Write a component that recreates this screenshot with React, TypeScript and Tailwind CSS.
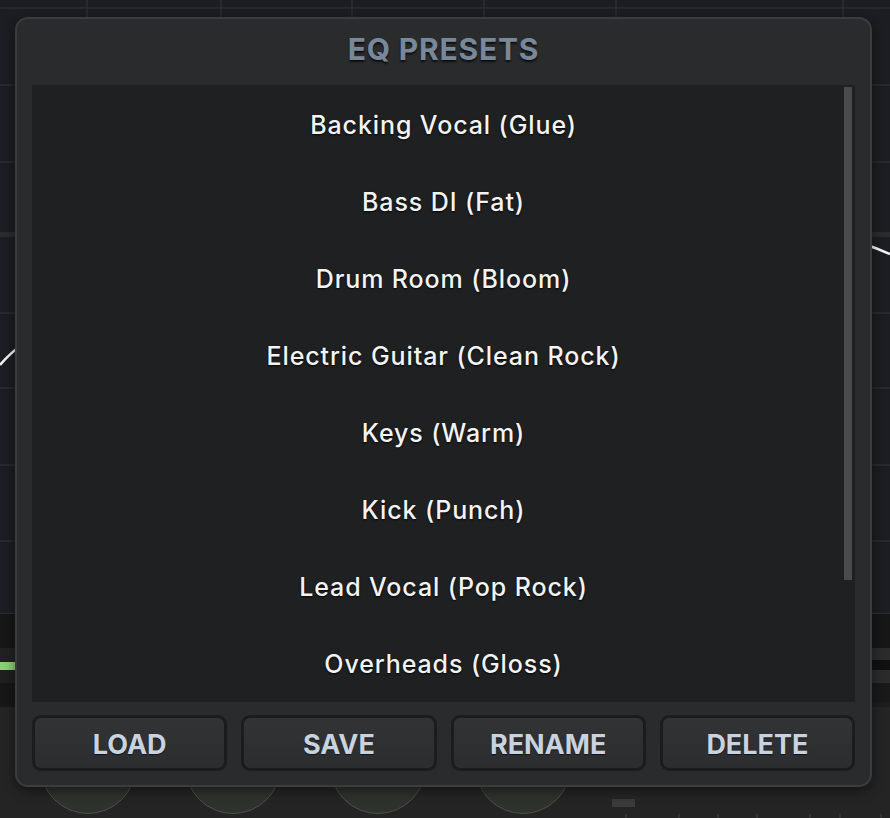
import React from "react";

const presets = [
  "Backing Vocal (Glue)",
  "Bass DI (Fat)",
  "Drum Room (Bloom)",
  "Electric Guitar (Clean Rock)",
  "Keys (Warm)",
  "Kick (Punch)",
  "Lead Vocal (Pop Rock)",
  "Overheads (Gloss)",
];

const actions = ["LOAD", "SAVE", "RENAME", "DELETE"];

function EqGraph() {
  const rows = [8, 85, 162, 313, 388, 465, 541];
  const cols = [87, 221, 352, 484, 616, 843];
  return (
    <svg width="890" height="614" className="block">
      <rect width="890" height="614" fill="#1c1d22" />
      {rows.map((y) => (
        <line key={y} x1="0" x2="890" y1={y} y2={y} stroke="#2c2d32" strokeWidth="1.5" />
      ))}
      <rect x="0" y="232" width="890" height="5" fill="#2a2b2f" />
      {cols.map((x) => (
        <line key={x} x1={x} x2={x} y1="0" y2="614" stroke="#2c2d32" strokeWidth="1.5" />
      ))}
      <path
        d="M0 365 C100 244, 690 165, 890 254"
        fill="none"
        stroke="#f2f2f2"
        strokeWidth="2.5"
      />
      <line x1="0" x2="890" y1="613.5" y2="613.5" stroke="#2c2d30" strokeWidth="1.5" />
    </svg>
  );
}

function Knob() {
  return (
    <div className="w-[96px] h-[96px] shrink-0 rounded-full bg-[#2e322c] border border-[#4a5146]" />
  );
}

function Background() {
  return (
    <div className="flex flex-col w-[890px] h-[818px] bg-[#232423]">
      <EqGraph />
      {/* meter strip */}
      <div className="flex h-[93px] bg-[#161716]">
        <div className="flex flex-col w-[15px]">
          <div className="h-[34px] bg-[#151615]" />
          <div className="h-[14px] bg-[#202120]" />
          <div className="h-[8px] bg-[#8ccf74]" />
          <div className="h-[13px] bg-[#1e1f1e]" />
          <div className="flex-1 bg-[#161716]" />
        </div>
        <div className="flex-1" />
        <div className="flex flex-col w-[18px]">
          <div className="h-[34px] bg-[#151615]" />
          <div className="h-[12px] bg-[#2a2b2a]" />
          <div className="h-[10px] bg-[#0f100f]" />
          <div className="h-[13px] bg-[#2a2b2a]" />
          <div className="h-[19px] bg-[#181918]" />
          <div className="flex-1 bg-[#1c1d1c]" />
        </div>
      </div>
      {/* knob row */}
      <div className="flex flex-1">
        <div className="flex flex-1 gap-[49px] pl-[40px] pt-[11px]">
          <Knob />
          <Knob />
          <Knob />
          <Knob />
          <svg width="300" height="100" className="ml-[-8px] shrink-0">
            <rect x="0" y="81" width="23" height="8" fill="#393b39" />
            {[14, 67, 106, 145, 198, 228, 269].map((x) => (
              <line key={x} x1={x} x2={x} y1="96" y2="104" stroke="#3a3b3a" strokeWidth="1.5" />
            ))}
          </svg>
        </div>
        <div className="flex flex-col w-[18px] -ml-[18px]">
          <div className="h-[61px] bg-[#1c1d1c]" />
          <div className="h-[5px] bg-[#46523e]" />
        </div>
      </div>
    </div>
  );
}

export default function App() {
  return (
    <div
      className="relative w-[890px] h-[818px] overflow-hidden bg-[#232423]"
      style={{ fontFamily: "Inter, 'Noto Sans', sans-serif" }}
    >
      <Background />

      {/* presets dialog */}
      <div className="absolute left-[15px] top-[17px] w-[857px] h-[770px] flex flex-col rounded-[13px] border-2 border-[#3b3c3e] bg-[#2a2b2d] shadow-[0_4px_12px_rgba(0,0,0,0.45)]">
        <div className="h-[66px] shrink-0 flex items-center justify-center pb-[6px]">
          <h1 className="text-[30px] font-bold tracking-[0.8px] text-[#798899] [text-shadow:0_2px_2px_rgba(0,0,0,0.7)]">
            EQ PRESETS
          </h1>
        </div>

        <div className="relative flex-1 mx-[15px] bg-[#1f2022] overflow-hidden pt-[2px]">
          {presets.map((name) => (
            <div
              key={name}
              className="h-[77px] flex items-center justify-center text-[25px] font-medium tracking-[0.9px] text-[#f3f3f3] [text-shadow:0_1px_2px_rgba(0,0,0,0.9)]"
            >
              {name}
            </div>
          ))}
          <div className="absolute right-[3px] top-[2px] w-[8px] h-[493px] bg-[#4a4b4d]" />
        </div>

        <div className="grid grid-cols-4 gap-[14px] px-[15px] pt-[13px] pb-[14px]">
          {actions.map((label) => (
            <button
              key={label}
              className="h-[56px] pt-[4px] rounded-[9px] border-[3px] border-[#1b1c1e] bg-gradient-to-b from-[#323335] to-[#2c2d2f] text-[27px] font-bold text-[#c8d3df] [text-shadow:0_1px_1px_rgba(0,0,0,0.6)]"
            >
              {label}
            </button>
          ))}
        </div>
      </div>
    </div>
  );
}
